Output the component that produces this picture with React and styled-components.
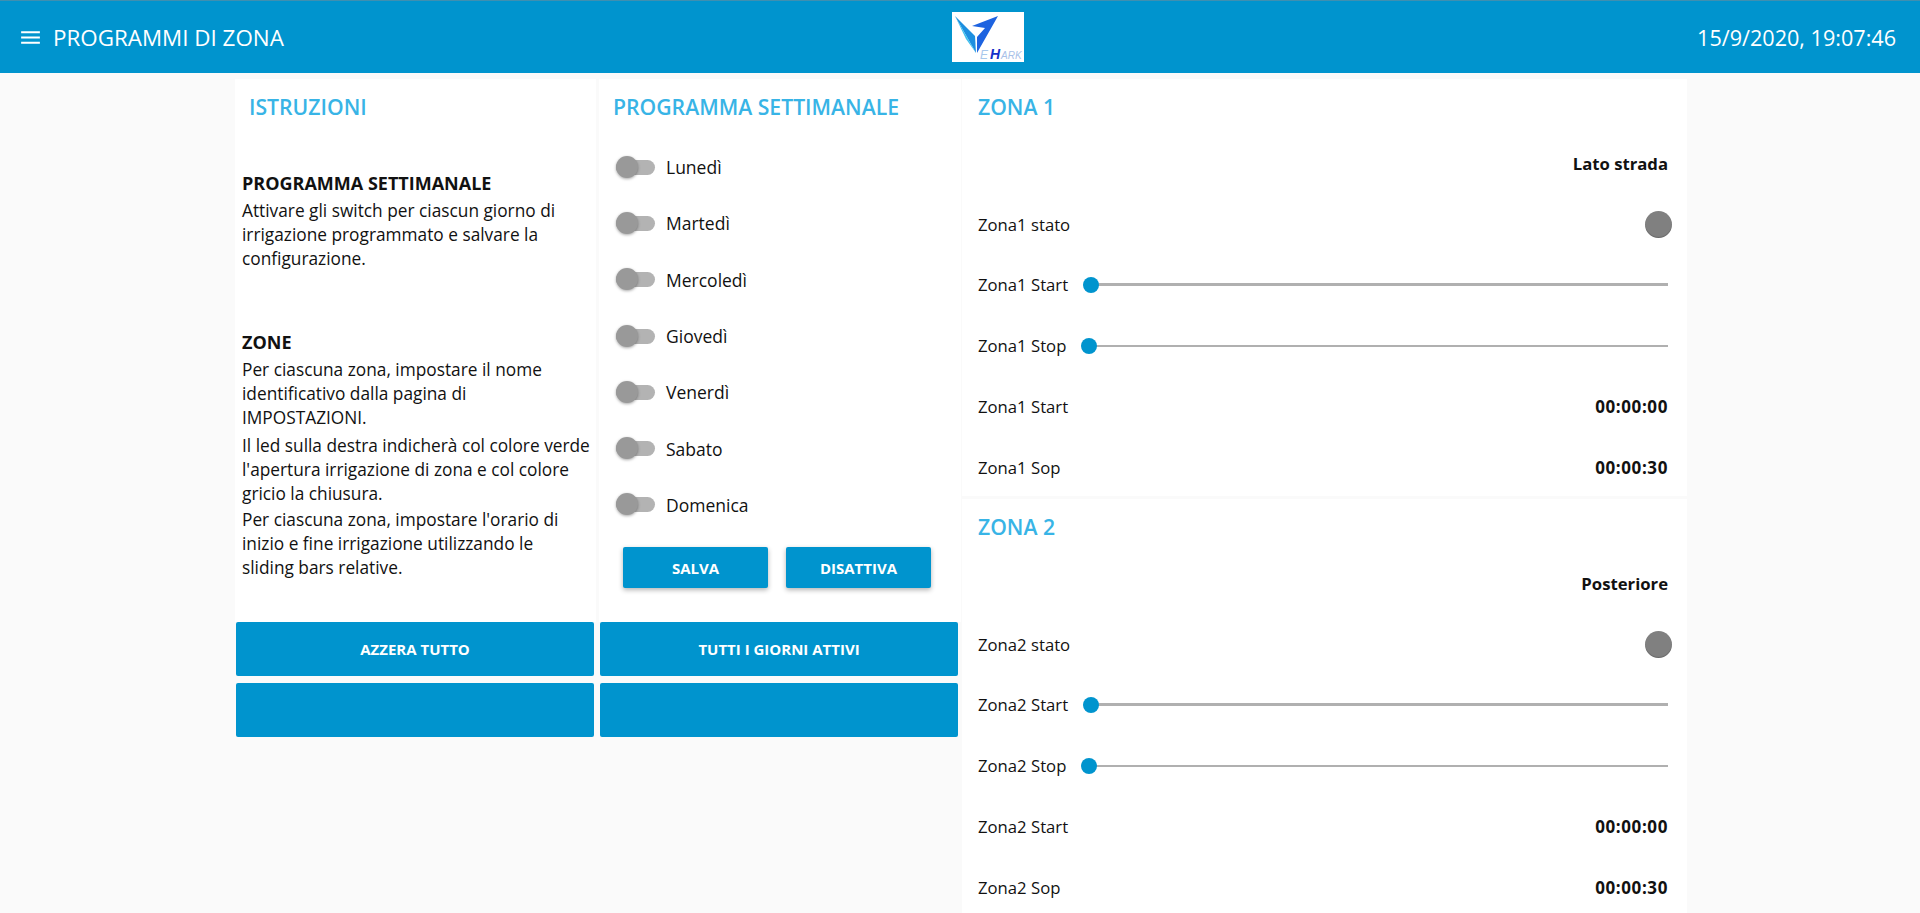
import React from 'react'
import styled, { createGlobalStyle } from 'styled-components'
import { MdMenu } from 'react-icons/md'

const Global = createGlobalStyle`
html, body { margin: 0; padding: 0; background: #fafafa; }
body { font-family: "Open Sans", "Noto Sans", sans-serif; color: #111; overflow-x: hidden; }
* { box-sizing: border-box; }
`

const Toolbar = styled.header`
height: 73px;
background: #0094ce;
border-top: 1px solid #3f8fb0;
color: #fff;
display: grid;
grid-template-columns: 934px 72px 1fr;
align-items: center;
padding: 0 24px 0 18px;
`
const ToolbarLeft = styled.div`
display: flex;
align-items: center;
gap: 10px;
font-size: 22.4px;
`
const Clock = styled.div`
font-size: 21.6px;
text-align: right;
`
const Main = styled.main`
width: 1454px;
margin: 6px 0 0 233px;
display: grid;
grid-template-columns: 364px 365px 725px;
`
const Column = styled.div`
display: flex;
flex-direction: column;
`
const Card = styled.section`
background: #fff;
margin: 0 1px 0 2px;
height: ${props => props.$h}px;
`
const CardTitle = styled.h2`
margin: 0;
height: 54px;
display: flex;
align-items: center;
padding-left: ${props => props.$indent}px;
color: #38b4e6;
font-size: 21.2px;
font-weight: 600;
`
const Notes = styled.div`
padding: 36px 5px 0 7px;
font-size: 17.3px;
line-height: 24px;
`
const NoteHead = styled.div`
font-weight: 700;
font-size: 18px;
line-height: 28px;
margin-bottom: 2px;
`
const NoteBlock = styled.div`
margin-bottom: ${props => props.$after || 0}px;
`
const DayList = styled.div`
padding-top: 6px;
`
const DayRow = styled.div`
height: 56.3px;
display: flex;
align-items: center;
gap: 11px;
padding-left: 17px;
font-size: 17.5px;
`
const Track = styled.span`
position: relative;
display: block;
width: 39px;
height: 15px;
border-radius: 8px;
background: #b3b3b3;
`
const Thumb = styled.span`
position: absolute;
left: 0;
top: -4px;
width: 22px;
height: 22px;
border-radius: 50%;
background: #999;
box-shadow: 0 1px 3px rgba(0, 0, 0, 0.35);
`
const ButtonRow = styled.div`
display: flex;
gap: 18px;
padding: 14px 0 0 24px;
`
const SmallButton = styled.button`
width: 145px;
height: 41px;
border: 0;
border-radius: 2px;
background: #0094ce;
color: #fff;
font: 700 15px "Open Sans", sans-serif;
box-shadow: 0 2px 5px rgba(0, 0, 0, 0.3);
`
const WideButton = styled.button`
display: block;
width: 358px;
height: 54px;
margin: 0 0 7px 3px;
border: 0;
border-radius: 2px;
background: #0094ce;
color: #fff;
font: 700 15px "Open Sans", sans-serif;
`
const ZoneRows = styled.div`
padding: 0 19px 0 16px;
`
const Row = styled.div`
height: ${props => props.$h}px;
display: flex;
align-items: center;
justify-content: ${props => props.$end ? 'flex-end' : 'space-between'};
font-size: 16.7px;
`
const Bold = styled.b`
font-weight: 700;
`
const Time = styled.b`
font-weight: 700;
font-size: 17px;
letter-spacing: 0.6px;
`
const Led = styled.span`
width: 27px;
height: 27px;
margin-right: -4px;
border-radius: 50%;
background: #808080;
box-shadow: inset 0 -1px 1px rgba(0, 0, 0, 0.2);
`
const Slider = styled.div`
flex: 1;
position: relative;
height: ${props => props.$t}px;
margin-left: 23px;
background: #b0b0b0;
`
const SliderThumb = styled.span`
position: absolute;
left: -8px;
top: 50%;
width: 16px;
height: 16px;
margin-top: -8px;
border-radius: 50%;
background: #0094ce;
`
const ZoneCard = styled(Card)`
margin: 0 0 3px 0;
`

const Logo = () => (
  <svg width="72" height="50" viewBox="0 0 72 50" style={{ display: 'block' }}>
    <rect width="72" height="50" fill="#fff" />
    <path d="M3 4 L24 41 L23 24 Z" fill="#1c8fe0" />
    <path d="M3 4 L24 41 L14 27 Z" fill="#3fc0ee" />
    <path d="M20 14 L46 4 L25 41 L25 25 L33 16 Z" fill="#1d63e0" />
    <text x="28" y="47" fontSize="12" fontStyle="italic" fill="#a8c8ec" fontFamily="Liberation Sans">E</text>
    <text x="38" y="47" fontSize="14" fontWeight="700" fontStyle="italic" fill="#1330c8" fontFamily="Liberation Sans">H</text>
    <text x="49" y="47" fontSize="10" fontStyle="italic" fill="#a8bfe8" fontFamily="Liberation Sans">ARK</text>
  </svg>
)

const days = ['Lunedì', 'Martedì', 'Mercoledì', 'Giovedì', 'Venerdì', 'Sabato', 'Domenica']

const Zone = ({ n, name }) => (
  <ZoneCard $h={417}>
    <CardTitle $indent={16}>ZONA {n}</CardTitle>
    <ZoneRows>
      <Row $h={61} $end><Bold>{name}</Bold></Row>
      <Row $h={60}>Zona{n} stato<Led /></Row>
      <Row $h={61}>Zona{n} Start<Slider $t={3}><SliderThumb /></Slider></Row>
      <Row $h={61}>Zona{n} Stop<Slider $t={2}><SliderThumb /></Slider></Row>
      <Row $h={61}>Zona{n} Start<Time>00:00:00</Time></Row>
      <Row $h={60}>Zona{n} Sop<Time>00:00:30</Time></Row>
    </ZoneRows>
  </ZoneCard>
)

export default function App() {
  return (
    <>
      <Global />
      <Toolbar>
        <ToolbarLeft><MdMenu size={25} />PROGRAMMI DI ZONA</ToolbarLeft>
        <Logo />
        <Clock>15/9/2020, 19:07:46</Clock>
      </Toolbar>
      <Main>
        <Column>
          <Card $h={543}>
            <CardTitle $indent={14}>ISTRUZIONI</CardTitle>
            <Notes>
              <NoteBlock $after={57}>
                <NoteHead>PROGRAMMA SETTIMANALE</NoteHead>
                Attivare gli switch per ciascun giorno di irrigazione programmato e salvare la configurazione.
              </NoteBlock>
              <NoteHead>ZONE</NoteHead>
              <NoteBlock $after={4}>Per ciascuna zona, impostare il nome identificativo dalla pagina di IMPOSTAZIONI.</NoteBlock>
              <NoteBlock $after={2}>Il led sulla destra indicherà col colore verde l'apertura irrigazione di zona e col colore gricio la chiusura.</NoteBlock>
              <NoteBlock>Per ciascuna zona, impostare l'orario di inizio e fine irrigazione utilizzando le<br />sliding bars relative.</NoteBlock>
            </Notes>
          </Card>
          <WideButton>AZZERA TUTTO</WideButton>
          <WideButton />
        </Column>
        <Column>
          <Card $h={543}>
            <CardTitle $indent={14}>PROGRAMMA SETTIMANALE</CardTitle>
            <DayList>
              {days.map(d => (
                <DayRow key={d}><Track><Thumb /></Track>{d}</DayRow>
              ))}
            </DayList>
            <ButtonRow>
              <SmallButton>SALVA</SmallButton>
              <SmallButton>DISATTIVA</SmallButton>
            </ButtonRow>
          </Card>
          <WideButton>TUTTI I GIORNI ATTIVI</WideButton>
          <WideButton />
        </Column>
        <Column>
          <Zone n={1} name="Lato strada" />
          <Zone n={2} name="Posteriore" />
        </Column>
      </Main>
    </>
  )
}
